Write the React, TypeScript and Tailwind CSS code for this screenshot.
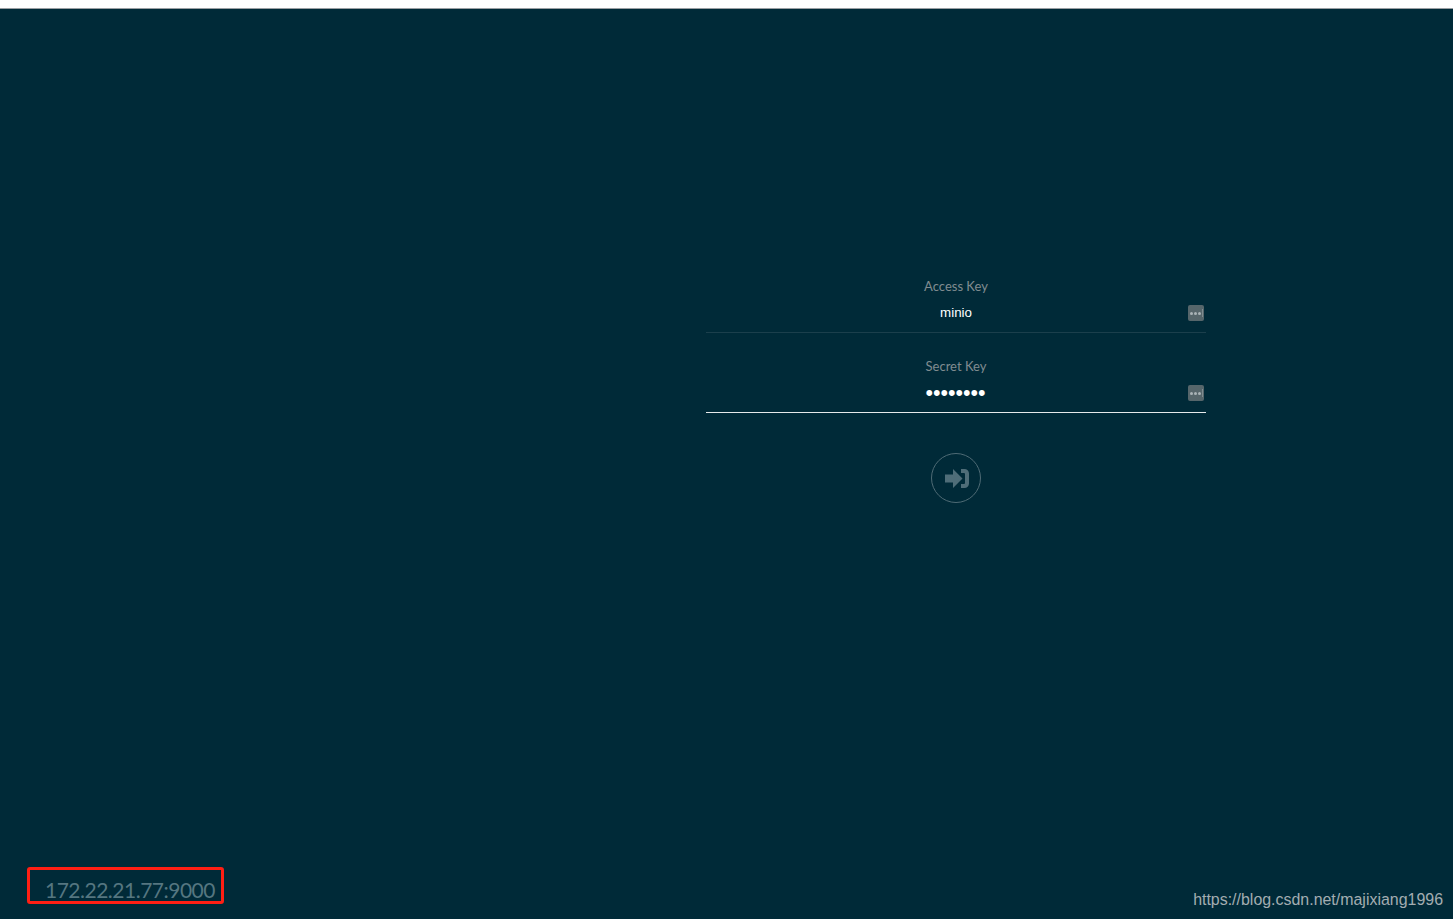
import React from 'react';

const KeyDots: React.FC = () => (
  <div className="w-4 h-4 rounded-[2px] bg-[#56666b] flex items-center justify-center gap-[1px] pl-[1px]">
    <span className="w-[3px] h-[3px] rounded-full bg-[#a9b3b6]" />
    <span className="w-[3px] h-[3px] rounded-full bg-[#a9b3b6]" />
    <span className="w-[3px] h-[3px] rounded-full bg-[#a9b3b6]" />
    <span className="w-[1px] h-[8px] bg-[#7f8c90]" />
  </div>
);

interface FieldProps {
  label: string;
  value: string;
  type: string;
  active?: boolean;
}

const Field: React.FC<FieldProps> = ({ label, value, type, active }) => (
  <div className={`h-[55px] flex flex-col border-b ${active ? 'border-[#e6eaeb]' : 'border-[#1b3f4c]'}`}>
    <label className="h-[17px] leading-[17px] text-center text-[13px] text-[#808c90] font-['Lato',sans-serif]">{label}</label>
    <div className="mt-[9px] h-[18px] flex items-center">
      <div className={type === 'password' ? 'w-[19px]' : 'w-[20px]'} />
      <input
        readOnly
        type={type}
        value={value}
        className={`flex-1 min-w-0 h-[18px] bg-transparent outline-none text-center text-white font-['Liberation_Sans',sans-serif] ${type === 'password' ? 'text-[21.5px]' : 'text-[13.33px]'}`}
      />
      <div className="w-[18px] mr-[2px] flex justify-end">
        <KeyDots />
      </div>
    </div>
  </div>
);

export default function App() {
  return (
    <div className="w-[1453px] h-[919px] overflow-hidden relative flex flex-col bg-[#002a38]">
      <div className="h-[8px] bg-white shrink-0" />
      <div className="h-[1px] bg-[#9a9fa3] shrink-0" />

      <div className="flex-1 flex pt-[269px]">
        <div className="w-[706px] shrink-0" />
        <div className="w-[500px] flex flex-col">
          <Field label="Access Key" value="minio" type="text" />
          <div className="h-[25px]" />
          <Field label="Secret Key" value="password" type="password" active />
          <button className="mt-[40px] self-center w-[50px] h-[50px] rounded-full border border-[#4f6b75] flex items-center justify-center pl-[1px]">
            <svg width="24" height="19" viewBox="0 0 24 19" fill="#4f6d78">
              <path d="M0 5.500h8V0L17.500 9.500L8 19V13.500H0z" />
              <path d="M16 0h3.500a4.500 4.500 0 0 1 4.500 4.500v10a4.500 4.500 0 0 1-4.500 4.500h-3.500v-4h3a1 1 0 0 0 1-1V5a1 1 0 0 0-1-1h-3z" />
            </svg>
          </button>
        </div>
      </div>

      {/* address highlighted on the screenshot */}
      <div className="absolute left-[27px] top-[867px] w-[197px] h-[37px] border-[3px] border-[#ff1f14] rounded-[3px] pl-[15px] pt-[7px] text-[21px] leading-[26px] tracking-[-0.5px] text-[#557680] font-['Lato',sans-serif]">
        172.22.21.77:9000
      </div>

      {/* blog watermark */}
      <div className="absolute right-[10px] top-[890px] text-[15.95px] leading-[20px] text-[#a3adb1] font-['Liberation_Sans',sans-serif]">
        https://blog.csdn.net/majixiang1996
      </div>
    </div>
  );
}
